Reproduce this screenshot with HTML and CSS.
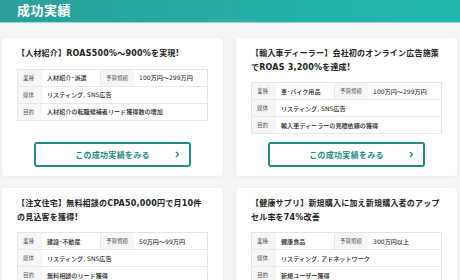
FILE: index.html
```html
<!DOCTYPE html>
<html lang="ja">
<head>
    <meta charset="UTF-8">
    <meta name="viewport" content="width=device-width, initial-scale=1.0">
    <title>成功実績</title>
    <link rel="stylesheet" href="styles.css">
</head>
<body>
    <header class="band"><h2>成功実績</h2></header>
    <main class="cases">
        <section class="case">
            <h3>【人材紹介】ROAS500%～900%を実現!</h3>
            <table>
                <tr><th>業種</th><td>人材紹介･派遣</td><th>予算規模</th><td>100万円～299万円</td></tr>
                <tr><th>媒体</th><td colspan="3">リスティング, SNS広告</td></tr>
                <tr><th>目的</th><td colspan="3">人材紹介の転職候補者リード獲得数の増加</td></tr>
            </table>
            <a class="more" href="#"><span></span><span>この成功実績をみる</span><svg width="5" height="7" viewBox="0 0 5 7"><polyline points="1,1 3.5,3.5 1,6" fill="none" stroke="#1f8a85" stroke-width="1.4"/></svg></a>
        </section>
        <section class="case">
            <h3>【輸入車ディーラー】会社初のオンライン広告施策でROAS 3,200%を達成!</h3>
            <table>
                <tr><th>業種</th><td>車･バイク用品</td><th>予算規模</th><td>100万円～299万円</td></tr>
                <tr><th>媒体</th><td colspan="3">リスティング, SNS広告</td></tr>
                <tr><th>目的</th><td colspan="3">輸入車ディーラーの見積依頼の獲得</td></tr>
            </table>
            <a class="more" href="#"><span></span><span>この成功実績をみる</span><svg width="5" height="7" viewBox="0 0 5 7"><polyline points="1,1 3.5,3.5 1,6" fill="none" stroke="#1f8a85" stroke-width="1.4"/></svg></a>
        </section>
        <section class="case">
            <h3>【注文住宅】無料相談のCPA50,000円で月10件の見込客を獲得!</h3>
            <table>
                <tr><th>業種</th><td>建設･不動産</td><th>予算規模</th><td>50万円～99万円</td></tr>
                <tr><th>媒体</th><td colspan="3">リスティング, SNS広告</td></tr>
                <tr><th>目的</th><td colspan="3">無料相談のリード獲得</td></tr>
            </table>
            <a class="more" href="#"><span></span><span>この成功実績をみる</span><svg width="5" height="7" viewBox="0 0 5 7"><polyline points="1,1 3.5,3.5 1,6" fill="none" stroke="#1f8a85" stroke-width="1.4"/></svg></a>
        </section>
        <section class="case">
            <h3>【健康サプリ】新規購入に加え新規購入者のアップセル率を74%改善</h3>
            <table>
                <tr><th>業種</th><td>健康食品</td><th>予算規模</th><td>300万円以上</td></tr>
                <tr><th>媒体</th><td colspan="3">リスティング, アドネットワーク</td></tr>
                <tr><th>目的</th><td colspan="3">新規ユーザー獲得</td></tr>
            </table>
            <a class="more" href="#"><span></span><span>この成功実績をみる</span><svg width="5" height="7" viewBox="0 0 5 7"><polyline points="1,1 3.5,3.5 1,6" fill="none" stroke="#1f8a85" stroke-width="1.4"/></svg></a>
        </section>
    </main>
</body>
</html>
```

FILE: styles.css
```css
body { margin: 0; background: #f5f5f5; font-family: "DejaVu Sans", "Noto Sans CJK JP", sans-serif; color: #222; }
.band { height: 22px; background: linear-gradient(90deg, #2a9f9a, #22b8b2); border-bottom: 1px solid #9ad8d4; }
.band h2 { margin: 0; padding-left: 17px; font-size: 13px; line-height: 22px; color: #fff; font-weight: 700; letter-spacing: 0.5px; }
.cases { display: grid; grid-template-columns: 221px 221px; column-gap: 13px; row-gap: 12px; padding: 15px 0 0 2px; }
.case { background: #fff; border-radius: 4px; box-shadow: 0 1px 4px rgba(0,0,0,0.05); padding: 9px 15px 9px; display: flex; flex-direction: column; }
.case h3 { margin: 0 0 8px; font-size: 8px; line-height: 13.5px; font-weight: 700; letter-spacing: 0.2px; }
.case table { width: 100%; border-collapse: collapse; border: 1px solid #e4e4e4; }
.case tr { height: 17px; border-bottom: 1px solid #e8e8e8; }
.case th { background: #f6f6f6; font-weight: 400; font-size: 5.5px; color: #555; text-align: left; padding: 0 0 0 5px; white-space: nowrap; }
.case th:first-child { width: 19px; }
.case th + td + th { width: 28px; border-left: 1px solid #e8e8e8; }
.case td { font-size: 6.1px; font-weight: 500; padding: 0 0 0 5px; white-space: nowrap; }
.case td:nth-child(2) { width: 53px; }
.more { margin-top: auto; align-self: center; width: 157px; height: 25px; box-sizing: border-box; border: 2px solid #218c86; border-radius: 3px; display: grid; grid-template-columns: 1fr auto 1fr; align-items: center; text-decoration: none; color: #1f8a85; font-size: 8px; font-weight: 700; letter-spacing: 0.3px; padding: 0 9px; }
.more svg { justify-self: end; }
.case table + .more { margin-top: 8px; }
.case:nth-child(1) .more, .case:nth-child(3) .more { margin-top: auto; }
```
